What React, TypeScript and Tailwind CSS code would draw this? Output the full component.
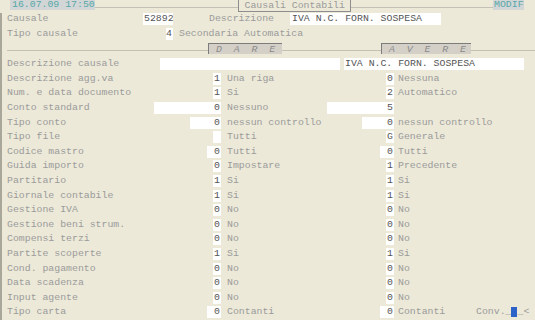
import React from 'react';

type Row = {
  label: string;
  lw: string;
  lv: string;
  ld: string;
  rw: string;
  rv: string;
  rd: string;
};

const rows: Row[] = [
  { label: 'Descrizione agg.va', lw: 'w-[8px]', lv: '1', ld: 'Una riga', rw: 'w-[8px]', rv: '0', rd: 'Nessuna' },
  { label: 'Num. e data documento', lw: 'w-[8px]', lv: '1', ld: 'Si', rw: 'w-[8px]', rv: '2', rd: 'Automatico' },
  { label: 'Conto standard', lw: 'w-[67px]', lv: '0', ld: 'Nessuno', rw: 'w-[67px]', rv: '5', rd: '' },
  { label: 'Tipo conto', lw: 'w-[31px]', lv: '0', ld: 'nessun controllo', rw: 'w-[32px]', rv: '0', rd: 'nessun controllo' },
  { label: 'Tipo file', lw: 'w-[8px]', lv: '', ld: 'Tutti', rw: 'w-[8px]', rv: 'G', rd: 'Generale' },
  { label: 'Codice mastro', lw: 'w-[14px]', lv: '0', ld: 'Tutti', rw: 'w-[14px]', rv: '0', rd: 'Tutti' },
  { label: 'Guida importo', lw: 'w-[8px]', lv: '0', ld: 'Impostare', rw: 'w-[8px]', rv: '1', rd: 'Precedente' },
  { label: 'Partitario', lw: 'w-[8px]', lv: '1', ld: 'Si', rw: 'w-[8px]', rv: '1', rd: 'Si' },
  { label: 'Giornale contabile', lw: 'w-[8px]', lv: '1', ld: 'Si', rw: 'w-[8px]', rv: '1', rd: 'Si' },
  { label: 'Gestione IVA', lw: 'w-[8px]', lv: '0', ld: 'No', rw: 'w-[8px]', rv: '0', rd: 'No' },
  { label: 'Gestione beni strum.', lw: 'w-[8px]', lv: '0', ld: 'No', rw: 'w-[8px]', rv: '0', rd: 'No' },
  { label: 'Compensi terzi', lw: 'w-[8px]', lv: '0', ld: 'No', rw: 'w-[8px]', rv: '0', rd: 'No' },
  { label: 'Partite scoperte', lw: 'w-[8px]', lv: '1', ld: 'Si', rw: 'w-[8px]', rv: '1', rd: 'Si' },
  { label: 'Cond. pagamento', lw: 'w-[8px]', lv: '0', ld: 'No', rw: 'w-[8px]', rv: '0', rd: 'No' },
  { label: 'Data scadenza', lw: 'w-[8px]', lv: '0', ld: 'No', rw: 'w-[8px]', rv: '0', rd: 'No' },
  { label: 'Input agente', lw: 'w-[8px]', lv: '0', ld: 'No', rw: 'w-[8px]', rv: '0', rd: 'No' },
];

function Field({ w, v, left }: { w: string; v: string; left?: boolean }) {
  return (
    <div
      className={`${w} h-[12px] bg-white text-[#555] leading-[12px] whitespace-pre overflow-hidden ${
        left ? 'text-left pl-[1px]' : 'text-right pr-[1px]'
      }`}
    >
      {v}
    </div>
  );
}

function FormRow({ r }: { r: Row }) {
  return (
    <div className="flex items-center h-[14.6px]">
      <div className="w-[214px] flex items-center justify-between">
        <span>{r.label}</span>
        <Field w={r.lw} v={r.lv} />
      </div>
      <div className="w-[173px] flex items-center justify-between">
        <span className="pl-[6px]">{r.ld}</span>
        <Field w={r.rw} v={r.rv} />
      </div>
      <div className="pl-[4px] flex-1">{r.rd}</div>
    </div>
  );
}

export default function App() {
  return (
    <div
      className="w-[535px] h-[320px] bg-[#ece9d8] overflow-hidden text-[9.85px] leading-[12px] text-[#9b9b9b] whitespace-pre"
      style={{ fontFamily: '"Liberation Mono", "Courier New", monospace' }}
    >
      {/* header */}
      <div className="flex items-start h-[12px]">
        <div className="w-[10px]" />
        <div className="w-[85px] h-[10px] bg-[#d3d6d6] text-[#58a8a8] leading-[10px] pl-[2px]">16.07.09 17:50</div>
        <div className="flex-1 mt-[7px] border-t border-[#c4c1b4]" />
        <div className="w-[113px] h-[12px] border-x border-b border-[#8d8d8d] pl-[6px] leading-[11px]">
          Causali Contabili
        </div>
        <div className="flex-1 mt-[7px] border-t border-[#c4c1b4]" />
        <div className="w-[31px] h-[10px] bg-[#d3d6d6] text-[#58a8a8] leading-[10px] pl-[1px]">MODIF</div>
        <div className="w-[11px]" />
      </div>

      <div className="border-l-2 border-[#a9a69a] pl-[5px] h-[308px]">
        {/* Causale */}
        <div className="flex items-center mt-[1px] h-[12px]">
          <span className="w-[136px]">Causale</span>
          <Field w="w-[30px]" v="52892" left />
          <div className="w-[36px]" />
          <span className="w-[81px]">Descrizione</span>
          <div className="w-[151px] h-[12px] bg-white text-[#555] pl-[2px]">IVA N.C. FORN. SOSPESA</div>
        </div>
        {/* Tipo causale */}
        <div className="flex items-center mt-[3px] h-[12px]">
          <span className="w-[159px]">Tipo causale</span>
          <Field w="w-[7px]" v="4" />
          <span className="pl-[6px]">Secondaria Automatica</span>
        </div>

        {/* Dare / Avere separator */}
        <div className="flex items-start mt-[3px] h-[11px]">
          <div className="w-[201px] mt-[7px] border-t border-[#c4c1b4]" />
          <div className="w-[74px] h-[11px] bg-[#d4d0c8] border-l border-t border-[#7c7c7c] pl-[7px] leading-[11px] italic text-[#8a8a8a]">
            D  A  R  E
          </div>
          <div className="w-[99px] mt-[7px] border-t border-[#c4c1b4]" />
          <div className="w-[90px] h-[11px] bg-[#d4d0c8] border-l border-t border-[#7c7c7c] pl-[7px] leading-[11px] italic text-[#8a8a8a]">
            A  V  E  R  E
          </div>
          <div className="flex-1 mt-[7px] border-t border-[#c4c1b4]" />
        </div>

        <div className="mt-[3px]">
          {/* Descrizione causale */}
          <div className="flex items-center h-[14.6px]">
            <span className="w-[153px]">Descrizione causale</span>
            <Field w="w-[180px]" v="" left />
            <div className="w-[4px]" />
            <Field w="w-[180px]" v="IVA N.C. FORN. SOSPESA" left />
          </div>
          {rows.map((r) => (
            <FormRow key={r.label} r={r} />
          ))}
          {/* Tipo carta */}
          <div className="flex items-center h-[14.6px]">
            <div className="w-[214px] flex items-center justify-between">
              <span>Tipo carta</span>
              <Field w="w-[14px]" v="0" />
            </div>
            <div className="w-[173px] flex items-center justify-between">
              <span className="pl-[6px]">Contanti</span>
              <Field w="w-[14px]" v="0" />
            </div>
            <div className="pl-[4px] w-[82px]">Contanti</div>
            <div className="flex items-center">
              <span>Conv.</span>
              <span>_</span>
              <span className="inline-block w-[6px] h-[10px] bg-[#2d62c8]" />
              <span>_&lt;</span>
            </div>
          </div>
        </div>
      </div>
    </div>
  );
}
